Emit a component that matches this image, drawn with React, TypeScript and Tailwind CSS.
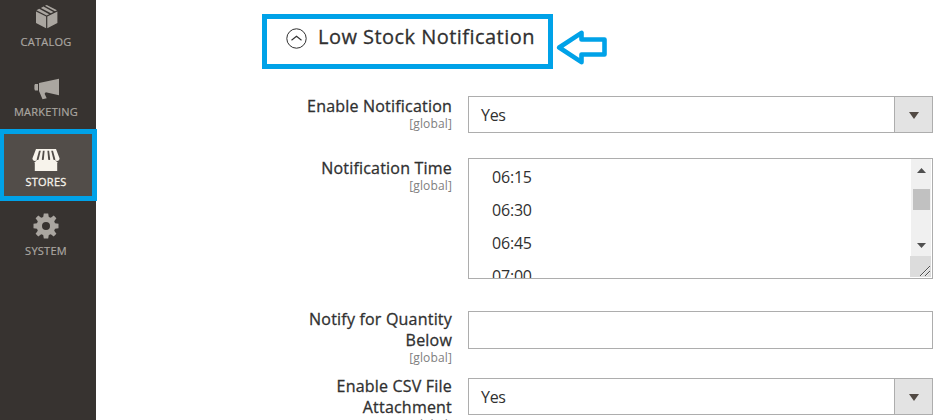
import type { ReactNode } from "react";

function NavItem({ label, active, className, children }: { label: string; active?: boolean; className: string; children: ReactNode }) {
  return (
    <li className={`relative flex w-[92px] flex-col items-center ${active ? "text-[#f7f3eb]" : "text-[#aaa6a0]"} ${className}`}>
      {children}
      <span className={`text-[11px] leading-[14px] whitespace-nowrap ${active ? "tracking-[0.25px] [-webkit-text-stroke:0.3px_#f7f3eb]" : "tracking-[0.25px] [-webkit-text-stroke:0.2px_#aaa6a0]"}`}>{label}</span>
    </li>
  );
}

function Sidebar() {
  return (
    <nav className="relative w-24 shrink-0 bg-[#373330]">
      <div className="absolute top-[129px] left-0 h-[72px] w-[97px] border-[5px] border-l-4 border-[#00a2e8] bg-[#524d49]" />
      <ul className="relative flex flex-col">
        <NavItem label="CATALOG" className="h-[70px] pt-[5px]">
          <svg width="22" height="24" viewBox="0 0 22 24" fill="currentColor" className="mb-[6px] ml-px">
            <path d="M0 6.4 10.1 11.6V23.2L0 18ZM21.4 6.4 11.3 11.6V23.2L21.4 18ZM0.5 5.2 3.2 3.8 13.2 9.2 10.7 10.5ZM4.9 2.9 7.4 1.6 17.4 7 14.9 8.3ZM9 0.8 10.7 0 21 5.2 19 6.2Z" />
          </svg>
        </NavItem>
        <NavItem label="MARKETING" className="h-[59px] pt-[8px]">
          <svg width="26" height="22" viewBox="0 0 26 22" fill="currentColor" className="mb-[5px] ml-[2px]">
            <path d="M1 6H4V12.4H1L0.4 11V7.2ZM5 5.1 25 0.8V17.2L11.8 14.2 10.6 15.7 12.7 20.3 8.5 21.2 5 12.9Z" />
          </svg>
        </NavItem>
        <NavItem label="STORES" active className="h-[72px] pt-[20px]">
          <svg width="28" height="22" viewBox="0 0 28 22" fill="currentColor" className="mb-[4px]">
            <path d="M4 0H24L27.6 9.6Q27.6 12 25.3 12Q23.7 12 23 11H5Q4.3 12 2.7 12Q.4 12 .4 9.6Z" />
            <path d="M2.8 13.2 5 11H23L25.2 13.2V22H2.8Z" />
            <path d="M7 1.8 8.8 1.8 6.6 10.6Q5.6 11.6 4.6 10.6ZM10.9 1.8H12.6L11.8 10.6Q10.8 11.6 9.8 10.6ZM15.4 1.8H17.1L18.2 10.6Q17.2 11.6 16.2 10.6ZM19.2 1.8H21L23.4 10.6Q22.4 11.6 21.4 10.6Z" fill="#524d49" />
          </svg>
        </NavItem>
        <NavItem label="SYSTEM" className="h-[70px] pt-[12px]">
          <svg width="26" height="26" viewBox="-13 -13 26 26" fill="currentColor" className="mb-[5px]">
            <path fillRule="evenodd" d="M-2.2-12.5H2.2L2.8-9 4.8-8.2 7.7-10.4 10.4-7.7 8.2-4.8 9-2.8 12.5-2.2V2.2L9 2.8 8.2 4.8 10.4 7.7 7.7 10.4 4.8 8.2 2.8 9 2.2 12.5H-2.2L-2.8 9-4.8 8.2-7.7 10.4-10.4 7.7-8.2 4.8-9 2.8-12.5 2.2V-2.2L-9-2.8-8.2-4.8-10.4-7.7-7.7-10.4-4.8-8.2-2.8-9ZM0-4A4 4 0 1 0 0 4A4 4 0 1 0 0-4Z" />
          </svg>
        </NavItem>
      </ul>
    </nav>
  );
}

function Field({ lines, className, labelClass, children }: { lines: string[]; className: string; labelClass: string; children: ReactNode }) {
  return (
    <div className={`flex items-start ${className}`}>
      <div className={`mr-4 w-[356px] shrink-0 text-right ${labelClass}`}>
        {lines.map((line) => (
          <div key={line} className="text-[16px] leading-[21px] tracking-[0.2px] text-[#303030] [-webkit-text-stroke:0.3px_#303030]">{line}</div>
        ))}
        <div className="text-[12px] leading-[13px] tracking-[0.15px] text-[#808080]">[global]</div>
      </div>
      {children}
    </div>
  );
}

function YesSelect() {
  return (
    <div className="flex h-[37px] w-[465px] border border-[#adadad] bg-white">
      <span className="flex-1 pl-3 text-[16px] leading-[36px] tracking-[-0.3px]">Yes</span>
      <span className="flex w-[38px] items-center justify-center border-l border-[#adadad] bg-[#e3e3e3]">
        <svg width="10" height="7" viewBox="0 0 10 7" fill="#514943" className="mt-px ml-px">
          <path d="M0 0H10L5 7Z" />
        </svg>
      </span>
    </div>
  );
}

function TimeList() {
  return (
    <div className="flex h-[121px] w-[465px] overflow-hidden border border-[#adadad] bg-white">
      <div className="flex-1 pt-[2px] pl-[23px] text-[16px] leading-[33px] tracking-[-0.2px]">
        {["06:15", "06:30", "06:45", "07:00"].map((t) => (
          <div key={t}>{t}</div>
        ))}
      </div>
      <div className="mr-px flex w-[21px] flex-col items-end">
        <div className="flex h-[97px] w-5 flex-col items-center bg-[#f0f0f0] pt-[9px]">
          <svg width="9" height="5" viewBox="0 0 9 5" fill="#505050" className="mb-4 ml-px">
            <path d="M0 5H9L4.5 0Z" />
          </svg>
          <div className="mb-[33px] h-[21px] w-[17px] bg-[#c1c1c1]" />
          <svg width="9" height="5" viewBox="0 0 9 5" fill="#505050" className="ml-px">
            <path d="M0 0H9L4.5 5Z" />
          </svg>
        </div>
        <svg width="21" height="21" viewBox="0 0 21 21" className="bg-[#dcdcdc]">
          <path d="M10 20 20 10M15 20 20 15" stroke="#505050" strokeWidth="1" />
          <path d="M11 20 20 11M16 20 20 16" stroke="#fff" strokeWidth=".6" />
        </svg>
      </div>
    </div>
  );
}

export default function App() {
  return (
    <div className="flex h-[420px] w-[951px] overflow-hidden bg-white font-['Open_Sans','Noto_Sans',sans-serif] text-[#303030]">
      <Sidebar />
      <main className="flex flex-1 flex-col">
        <div className="mt-[14px] ml-[166px] flex items-start">
          <h2 className="flex h-[55px] w-[291px] items-start border-[5px] border-[#00a2e8] pl-[19px]">
            <svg width="21" height="21" viewBox="0 0 21 21" fill="none" stroke="#303030" className="mt-[9px] mr-[11px] shrink-0">
              <circle cx="10.5" cy="10.5" r="9.7" strokeWidth="1" />
              <path d="M5.5 12.3 10.5 8.3 15.5 12.3" strokeWidth="1.1" />
            </svg>
            <span className="pt-[3px] text-[20px] leading-[30px] tracking-[0.46px] whitespace-nowrap [-webkit-text-stroke:0.3px_#303030]">Low Stock Notification</span>
          </h2>
          <svg width="52" height="36" viewBox="0 0 52 36" fill="none" stroke="#00a2e8" strokeWidth="4.6" strokeLinejoin="round" className="mt-4 ml-[3px]">
            <path d="M3.2 17.5 25.5 2.8V9.5H48.5V24.5H25.5V32.2Z" />
          </svg>
        </div>
        <Field lines={["Enable Notification"]} className="mt-[27px] h-[62px]" labelClass="">
          <YesSelect />
        </Field>
        <Field lines={["Notification Time"]} className="h-[153px]" labelClass="">
          <TimeList />
        </Field>
        <Field lines={["Notify for Quantity", "Below"]} className="h-[67px]" labelClass="-mt-[2px]">
          <div className="h-[38px] w-[465px] border border-[#adadad] bg-white" />
        </Field>
        <Field lines={["Enable CSV File", "Attachment"]} className="h-[42px]" labelClass="-mt-[2px]">
          <YesSelect />
        </Field>
      </main>
    </div>
  );
}
